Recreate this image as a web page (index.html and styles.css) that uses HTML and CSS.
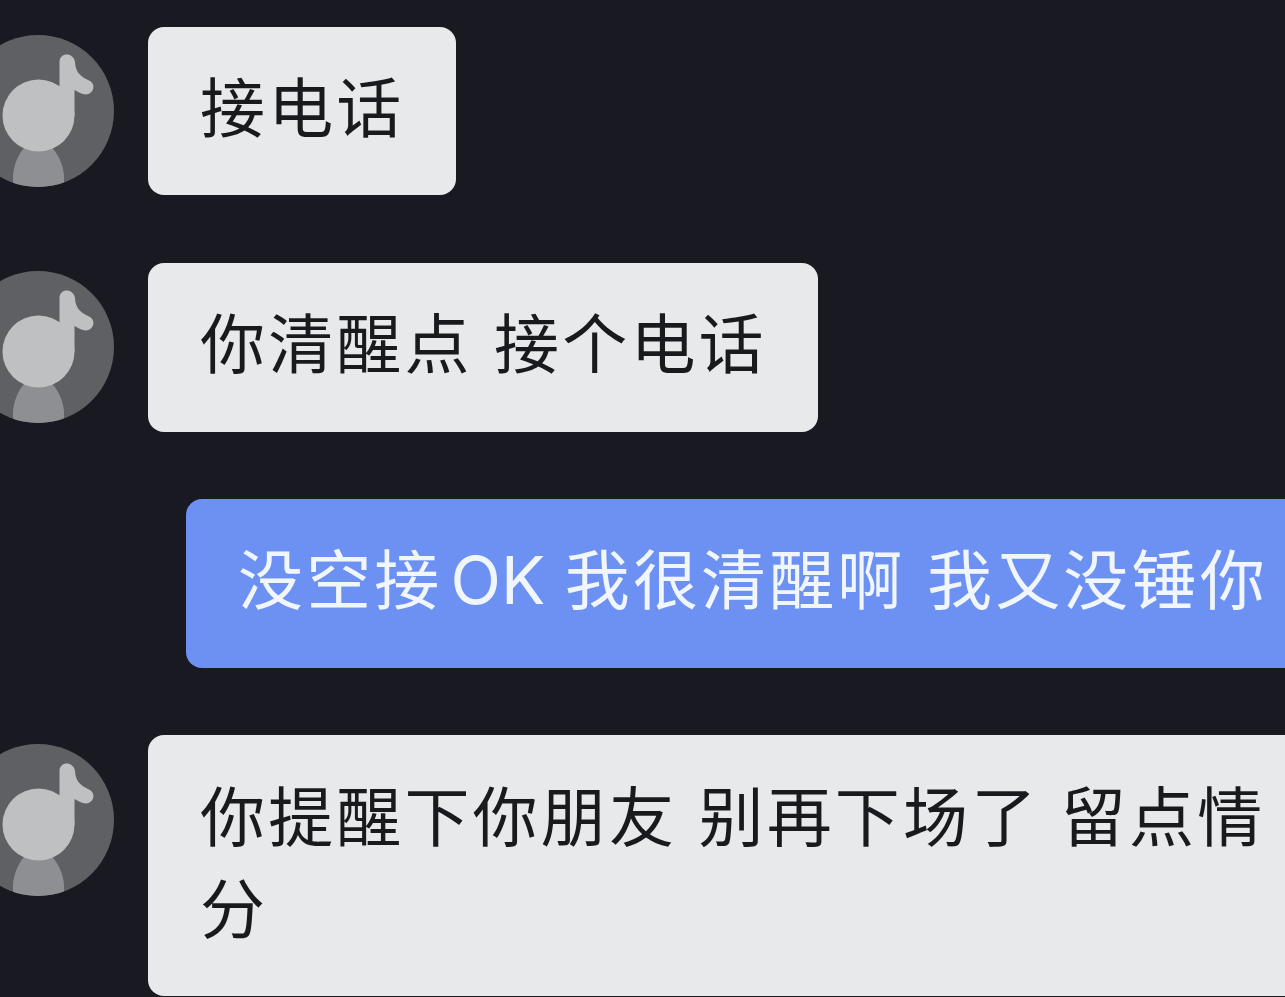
FILE: index.html
```html
<!DOCTYPE html>
<html lang="zh-CN">
<head>
<meta charset="utf-8">
<title>聊天</title>
<link rel="stylesheet" href="styles.css">
</head>
<body>
<svg class="defs" width="0" height="0" aria-hidden="true">
  <defs>
    <clipPath id="round"><circle cx="76" cy="76" r="76"/></clipPath>
    <symbol id="avatar" viewBox="0 0 152 152">
      <circle cx="76" cy="76" r="76" fill="#5f6063"/>
      <g clip-path="url(#round)">
        <path d="M51 152V142C51 128 61 106 76 106S102 128 102 142V152Z" fill="#8e8f92"/>
        <circle cx="76.500" cy="80.500" r="36" fill="#bfc0c2"/>
        <path d="M97.500 60V27C97.500 17 111.500 17 113 27C113.500 36 117 41 127 45.500C136 50 130 62 121 59C118 58 115 56.500 112.500 55V81L97 90Z" fill="#bfc0c2"/>
      </g>
    </symbol>
  </defs>
</svg>
<main class="chat">
  <div class="row">
    <svg class="avatar"><use href="#avatar"/></svg>
    <p class="bubble"><span>接电话</span></p>
  </div>
  <div class="row">
    <svg class="avatar"><use href="#avatar"/></svg>
    <p class="bubble"><span>你清醒点</span><span>接个电话</span></p>
  </div>
  <div class="row row-own">
    <p class="bubble bubble-own"><span>没空接</span><span class="latin">OK</span><span>我很清醒啊</span><span>我又没锤你</span></p>
  </div>
  <div class="row">
    <svg class="avatar"><use href="#avatar"/></svg>
    <p class="bubble bubble-wide"><span>你提醒下你朋友</span><span>别再下场了</span><span>留点情</span><br><span>分</span></p>
  </div>
</main>
</body>
</html>
```
FILE: styles.css
```css
* { box-sizing: border-box; }
body {
  margin: 0;
  height: 997px;
  overflow: hidden;
  background: #191922;
  font-family: "Noto Sans CJK SC", sans-serif;
}
.defs { display: block; }
.chat {
  width: 100%;
  height: 997px;
  overflow: hidden;
  padding-top: 26.500px;
  display: flex;
  flex-direction: column;
  gap: 67.300px;
}
.row { display: flex; align-items: flex-start; }
.avatar {
  flex: none;
  width: 152px;
  height: 152px;
  margin: 8.500px 34px 0 -38px;
}
.bubble {
  flex: none;
  margin: 0;
  height: 168.900px;
  padding: 31.500px 51.500px 0 52px;
  border-radius: 16px;
  background: #e7e9ea;
  color: #191a1e;
  font-size: 65px;
  font-weight: 400;
  line-height: 92.500px;
  letter-spacing: 3.150px;
  white-space: nowrap;
}
.bubble span + span { margin-left: 21.500px; }
.bubble br + span { margin-left: 0; }
.row-own { padding-left: 186px; }
.bubble-own {
  flex: 1 1 0;
  min-width: 0;
  padding-right: 0;
  border-radius: 16px 0 0 16px;
  background: #6c91f3;
  color: #f0f6fc;
}
.bubble .latin {
  font-family: Inter, sans-serif;
  font-size: 66px;
  font-weight: 400;
  line-height: 1;
  letter-spacing: 0;
}
.bubble span + .latin { margin-left: 8px; }
.bubble .latin + span { margin-left: 19.500px; }
.bubble-wide {
  flex: 1 1 0;
  min-width: 0;
  height: 261px;
  padding-right: 0;
  border-radius: 16px 0 0 16px;
}
```
